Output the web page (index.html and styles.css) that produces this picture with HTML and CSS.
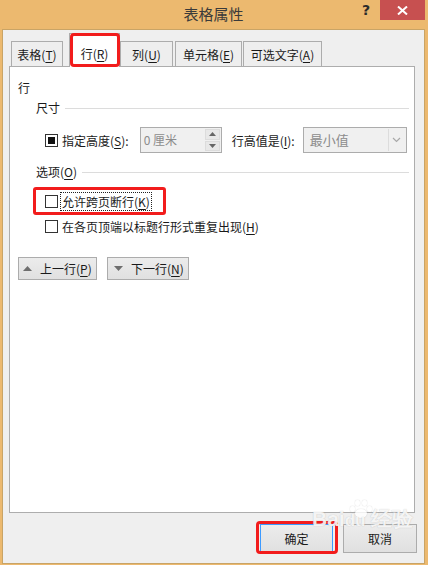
FILE: index.html
```html
<!DOCTYPE html>
<html lang="zh">
<head>
    <meta charset="UTF-8">
    <title>表格属性</title>
    <link rel="stylesheet" href="styles.css">
</head>
<body>
    <div class="window">
        <div class="titlebar">
            <span></span>
            <span class="title">表格属性</span>
            <div class="controls">
                <span class="help">?</span>
                <span class="close">
                    <svg width="11" height="9" viewBox="0 0 11 9"><path d="M1 0.5 L10 8.5 M10 0.5 L1 8.5" stroke="#fff" stroke-width="2"/></svg>
                </span>
            </div>
        </div>

        <div class="dialog">
            <div class="tabs">
                <div class="tab t1">表格(<u>T</u>)</div>
                <div class="tab active mark">行(<u>R</u>)</div>
                <div class="tab t3">列(<u>U</u>)</div>
                <div class="tab t4">单元格(<u>E</u>)</div>
                <div class="tab t5">可选文字(<u>A</u>)</div>
            </div>

            <div class="panel">
                <div class="heading">行</div>

                <div class="group-title"><span>尺寸</span><i class="rule"></i></div>
                <div class="size-row">
                    <span class="check mixed"></span>
                    <span class="lbl">指定高度(<u>S</u>):</span>
                    <div class="spin">
                        <span class="spin-value">0 厘米</span>
                        <div class="spin-btns">
                            <span><svg width="7" height="4" viewBox="0 0 7 4"><path d="M0 4 L3.5 0 L7 4Z" fill="#666"/></svg></span>
                            <span><svg width="7" height="4" viewBox="0 0 7 4"><path d="M0 0 L3.5 4 L7 0Z" fill="#666"/></svg></span>
                        </div>
                    </div>
                    <span class="lbl gap-l">行高值是(<u>I</u>):</span>
                    <div class="select">
                        <span class="select-value">最小值</span>
                        <span class="select-arrow">
                            <svg width="9" height="6" viewBox="0 0 9 6"><path d="M1 1 L4.5 4.5 L8 1" fill="none" stroke="#a8a8a8" stroke-width="1.2"/></svg>
                        </span>
                    </div>
                </div>

                <div class="group-title opts"><span>选项(<u>O</u>)</span><i class="rule"></i></div>
                <div class="opt-row mark-row">
                    <span class="check"></span>
                    <span class="focus">允许跨页断行(<u>K</u>)</span>
                </div>
                <div class="opt-row">
                    <span class="check"></span>
                    <span>在各页顶端以标题行形式重复出现(<u>H</u>)</span>
                </div>

                <div class="nav">
                    <button class="btn nav-btn"><svg width="9" height="5" viewBox="0 0 9 5"><path d="M0 5 L4.5 0 L9 5Z" fill="#6e6e6e"/></svg><span>上一行(<u>P</u>)</span></button>
                    <button class="btn nav-btn"><svg width="9" height="5" viewBox="0 0 9 5"><path d="M0 0 L4.5 5 L9 0Z" fill="#6e6e6e"/></svg><span>下一行(<u>N</u>)</span></button>
                </div>
            </div>

            <div class="footer">
                <button class="btn big default mark-ok">确定</button>
                <button class="btn big">取消</button>
            </div>
        </div>

        <div class="watermark">
            <span class="paw"><i></i><i></i><i></i><i></i><b></b></span>
            <span class="wm-logo">Bai<span class="du">du</span> 经验</span>
        </div>
    </div>
</body>
</html>
```

FILE: styles.css
```css
*{
    box-sizing: border-box;
}
body{
    margin: 0;
    font-family: "Noto Sans CJK SC", "Liberation Sans", sans-serif;
    font-size: 12px;
    color: #1a1a1a;
}
u{
    text-underline-offset: 2px;
}
.window{
    position: relative;
    width: 428px;
    height: 565px;
    background: #ecb96f;
    padding: 0 3px 1px 2px;
    display: flex;
    flex-direction: column;
}
.titlebar{
    height: 29px;
    display: grid;
    grid-template-columns: 1fr auto 1fr;
}
.title{
    font-size: 15px;
    line-height: 28px;
    color: #3a3a3a;
}
.controls{
    display: flex;
    justify-content: flex-end;
    align-items: flex-start;
}
.help{
    font-family: "DejaVu Sans", sans-serif;
    font-weight: bold;
    font-size: 14px;
    line-height: 20px;
    color: #2b2b2b;
    margin-right: 10px;
}
.close{
    width: 45px;
    height: 20px;
    background: #c75050;
    display: flex;
    align-items: center;
    justify-content: center;
}
.dialog{
    flex: 1;
    background: #efefef;
    border: 1px solid #c9a466;
    display: flex;
    flex-direction: column;
}

/* tabs */
.tabs{
    height: 36px;
    display: flex;
    align-items: flex-end;
    padding-left: 8px;
}
.tab{
    height: 25px;
    line-height: 24px;
    padding-top: 1px;
    text-align: center;
    border: 1px solid #acacac;
    border-bottom: none;
    background: #eeeeee;
}
.t1{ width: 52px; }
.t3{ width: 53px; }
.t4{ width: 67px; margin-left: 2px; }
.t5{ width: 79px; margin-left: 1px; }
.tab.active{
    position: relative;
    z-index: 1;
    width: 51px;
    height: 34px;
    margin-left: 6px;
    margin-bottom: -1px;
    padding-top: 8px;
    background: #fff;
}
.mark::after{
    content: "";
    position: absolute;
    top: -1px;
    left: 0;
    right: -1px;
    bottom: 0;
    border: 3px solid #f21c1c;
    border-radius: 4px;
}

/* panel */
.panel{
    flex: 1;
    margin: 0 9px 0 6px;
    background: #fff;
    border: 1px solid #adadad;
    padding: 13px 5px 0 8px;
}
.heading{
    line-height: 16px;
}
.group-title{
    display: flex;
    align-items: center;
    margin: 4px 0 0 18px;
    line-height: 16px;
}
.group-title .rule{
    flex: 1;
    height: 1px;
    background: #dcdcdc;
    margin-left: 5px;
}
.group-title.opts{
    margin-top: 11px;
}
.size-row{
    display: flex;
    align-items: center;
    margin: 11px 0 0 27px;
    height: 26px;
}
.check{
    width: 13px;
    height: 13px;
    border: 1px solid #333;
    background: #fff;
    display: flex;
    align-items: center;
    justify-content: center;
    margin-right: 4px;
    flex-shrink: 0;
}
.check.mixed::before{
    content: "";
    width: 7px;
    height: 7px;
    background: #111;
}
.lbl{
    margin-right: 11px;
}
.lbl.gap-l{
    margin-left: 10px;
    margin-right: 8px;
}
.spin{
    width: 82px;
    height: 26px;
    border: 1px solid #acacac;
    background: #f0f0f0;
    display: flex;
}
.spin-value, .select-value{
    flex: 1;
    color: #8c8c8c;
    line-height: 24px;
    padding-left: 3px;
}
.spin-btns{
    width: 16px;
    display: flex;
    flex-direction: column;
    gap: 1px;
    padding: 1px 1px 1px 0;
}
.spin-btns span{
    flex: 1;
    background: #e8e8e8;
    border: 1px solid #dcdcdc;
    display: flex;
    align-items: center;
    justify-content: center;
}
.select{
    width: 104px;
    height: 26px;
    border: 1px solid #acacac;
    background: #f0f0f0;
    display: flex;
}
.select-value{
    font-size: 13px;
    padding-left: 6px;
}
.select-arrow{
    width: 17px;
    border-left: 1px solid #dcdcdc;
    margin: 1px 1px 1px 0;
    display: flex;
    align-items: center;
    justify-content: center;
}
.opt-row{
    position: relative;
    display: flex;
    align-items: center;
    width: 127px;
    height: 22px;
    margin-left: 18px;
    padding-left: 9px;
}
.mark-row{
    margin-top: 10px;
}
.opt-row + .opt-row{
    width: auto;
    margin-top: 3px;
}
.focus{
    outline: 1px dotted #222;
    outline-offset: 1px;
    line-height: 15px;
}
.mark-row::after{
    content: "";
    position: absolute;
    top: -3px;
    left: -3px;
    right: -3px;
    bottom: -3px;
    border: 3px solid #f21c1c;
    border-radius: 3px;
}

/* buttons */
.btn{
    font-family: inherit;
    font-size: 12px;
    color: #1a1a1a;
    border: 1px solid #acacac;
    background: linear-gradient(#ececec, #e0e0e0);
    padding: 0;
}
.nav{
    display: flex;
    gap: 10px;
    margin-top: 20px;
}
.nav-btn{
    height: 23px;
    display: flex;
    align-items: center;
    gap: 8px;
    padding: 0 0 0 4px;
    white-space: nowrap;
}
.nav-btn:first-child{
    width: 79px;
}
.nav-btn:last-child{
    width: 82px;
    padding-left: 6px;
}
.footer{
    height: 50px;
    display: flex;
    justify-content: flex-end;
    align-items: flex-start;
    gap: 10px;
    padding: 11px 7px 0 0;
}
.big{
    width: 74px;
    height: 29px;
}
.default{
    position: relative;
    border-color: #3c9aff;
    width: 73px;
}
.mark-ok::after{
    content: "";
    position: absolute;
    top: -4px;
    left: -5px;
    right: -6px;
    bottom: -2px;
    border: 3px solid #f21c1c;
    border-radius: 4px;
}

/* watermark */
.watermark{
    position: absolute;
    left: 312px;
    top: 500px;
    width: 100px;
    height: 32px;
    color: rgba(255, 255, 255, 0.85);
    text-shadow: 0 0 1px rgba(120, 120, 120, 0.45);
    pointer-events: none;
}
.paw{
    position: absolute;
    left: 38px;
    top: 0;
    width: 22px;
    height: 18px;
}
.paw i, .paw b{
    position: absolute;
    background: rgba(255, 255, 255, 0.8);
    box-shadow: 0 0 1px rgba(120, 120, 120, 0.5);
    border-radius: 50%;
}
.paw i{
    width: 5px;
    height: 6px;
}
.paw i:nth-child(1){ left: 0; top: 6px; }
.paw i:nth-child(2){ left: 5px; top: 0; }
.paw i:nth-child(3){ left: 12px; top: 0; }
.paw i:nth-child(4){ left: 17px; top: 6px; }
.paw b{
    left: 5px;
    top: 9px;
    width: 12px;
    height: 9px;
}
.wm-logo{
    position: absolute;
    left: 0;
    top: 8px;
    font-family: "Liberation Sans", sans-serif;
    font-weight: bold;
    font-size: 21px;
    line-height: 22px;
    white-space: nowrap;
}
.wm-logo .du{
    font-size: 17px;
}
```
